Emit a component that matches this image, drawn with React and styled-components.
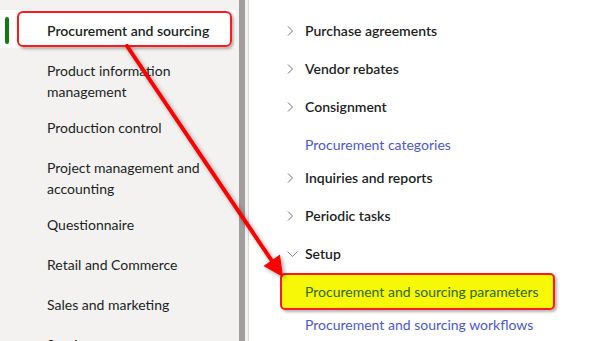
import styled, { createGlobalStyle } from 'styled-components'

const GlobalStyle = createGlobalStyle`
  html, body {
    margin: 0;
    padding: 0;
    background: #ffffff;
  }
  body {
    font-family: 'Segoe UI', Lato, 'Liberation Sans', sans-serif;
    -webkit-font-smoothing: antialiased;
  }
`

const Page = styled.div`
  position: relative;
  display: flex;
  width: 594px;
  height: 341px;
  overflow: hidden;
  background: #ffffff;
`

const Sidebar = styled.nav`
  width: 239px;
  flex-shrink: 0;
  padding-top: 10px;
  background: #f3f2f1;
  box-sizing: border-box;
`

const ScrollTrack = styled.div`
  display: flex;
  flex-shrink: 0;
  height: 100%;
`

const ScrollThumb = styled.div`
  width: 6px;
  background: #a19f9d;
`

const Gutter = styled.div`
  width: 3px;
  background: #f3f2f1;
  border-right: 1px solid #dcdad8;
`

const NavItem = styled.div`
  position: relative;
  box-sizing: border-box;
  min-height: 40px;
  padding: 9px 12px 6px 47px;
  font-size: 14px;
  line-height: 21px;
  color: #201f1e;
`

const SelectedItem = styled.div`
  position: relative;
  display: flex;
  align-items: center;
  height: 38px;
  margin: 0 3px 3px 0;
  padding: 2px 0 0 47px;
  box-sizing: border-box;
  background: #ffffff;
  font-size: 14px;
  font-weight: 600;
  color: #201f1e;

  &::before {
    content: '';
    position: absolute;
    left: 5px;
    top: 7px;
    width: 4px;
    height: 27px;
    border-radius: 2px;
    background: #107c10;
  }

  &::after {
    content: '';
    position: absolute;
    left: 17px;
    right: 4px;
    top: 1px;
    bottom: 1px;
    border: 2px solid #ff1a1a;
    border-radius: 6px;
    box-shadow: 2px 2px 3px rgba(0, 0, 0, 0.3);
  }
`

const Content = styled.main`
  flex: 1;
  padding-top: 14px;
  background: #ffffff;
`

const Row = styled.div`
  display: flex;
  align-items: center;
  height: 33px;
  padding-left: ${(p) => (p.$link ? '56px' : '35px')};
  margin-bottom: ${(p) => (p.$link ? '0' : '5px')};
  font-size: 14px;
  font-weight: ${(p) => (p.$link ? 400 : 600)};
  color: ${(p) => (p.$link ? '#4b58d6' : '#201f1e')};
`

const Chevron = styled.svg`
  width: 16px;
  height: 16px;
  margin-right: 5px;
  flex-shrink: 0;
`

const Marked = styled.span`
  display: inline-flex;
  align-items: center;
  height: 37px;
  margin-left: -25px;
  padding: 0 14px 0 23px;
  box-sizing: border-box;
  background: #f7f708;
  color: #2f6a10;
  border: 2px solid #ff1a1a;
  border-radius: 5px;
  box-shadow: 2px 2px 3px rgba(0, 0, 0, 0.3);
`

const Overlay = styled.svg`
  position: absolute;
  left: 0;
  top: 0;
  pointer-events: none;
  filter: drop-shadow(2px 2px 2px rgba(0, 0, 0, 0.35));
`

const navItems = [
  'Product information management',
  'Production control',
  'Project management and accounting',
  'Questionnaire',
  'Retail and Commerce',
  'Sales and marketing',
  'Service management',
]

const ChevronRight = () => (
  <Chevron viewBox="0 0 16 16">
    <path d="M4 3.5 L8.5 8 L4 12.5" fill="none" stroke="#6b6f86" strokeWidth="1" />
  </Chevron>
)

const ChevronDown = () => (
  <Chevron viewBox="0 0 16 16">
    <path d="M3.5 5.5 L8.5 10.5 L13.5 5.5" fill="none" stroke="#7a8aa8" strokeWidth="1" />
  </Chevron>
)

function App() {
  return (
    <>
      <GlobalStyle />
      <Page>
        <Sidebar>
          <SelectedItem>Procurement and sourcing</SelectedItem>
          {navItems.map((label) => (
            <NavItem key={label}>{label}</NavItem>
          ))}
        </Sidebar>
        <ScrollTrack>
          <ScrollThumb />
          <Gutter />
        </ScrollTrack>
        <Content>
          <Row><ChevronRight />Purchase agreements</Row>
          <Row><ChevronRight />Vendor rebates</Row>
          <Row><ChevronRight />Consignment</Row>
          <Row $link>Procurement categories</Row>
          <Row><ChevronRight />Inquiries and reports</Row>
          <Row><ChevronRight />Periodic tasks</Row>
          <Row><ChevronDown />Setup</Row>
          <Row $link>
            <Marked>Procurement and sourcing parameters</Marked>
          </Row>
          <Row $link>Procurement and sourcing workflows</Row>
        </Content>
        <Overlay width="594" height="341" viewBox="0 0 594 341">
          <line x1="127" y1="46" x2="272" y2="261" stroke="#ff0000" strokeWidth="4" strokeLinecap="round" />
          <polygon points="283,277 280,254.5 263.5,266" fill="#ff0000" />
        </Overlay>
      </Page>
    </>
  )
}

export default App
